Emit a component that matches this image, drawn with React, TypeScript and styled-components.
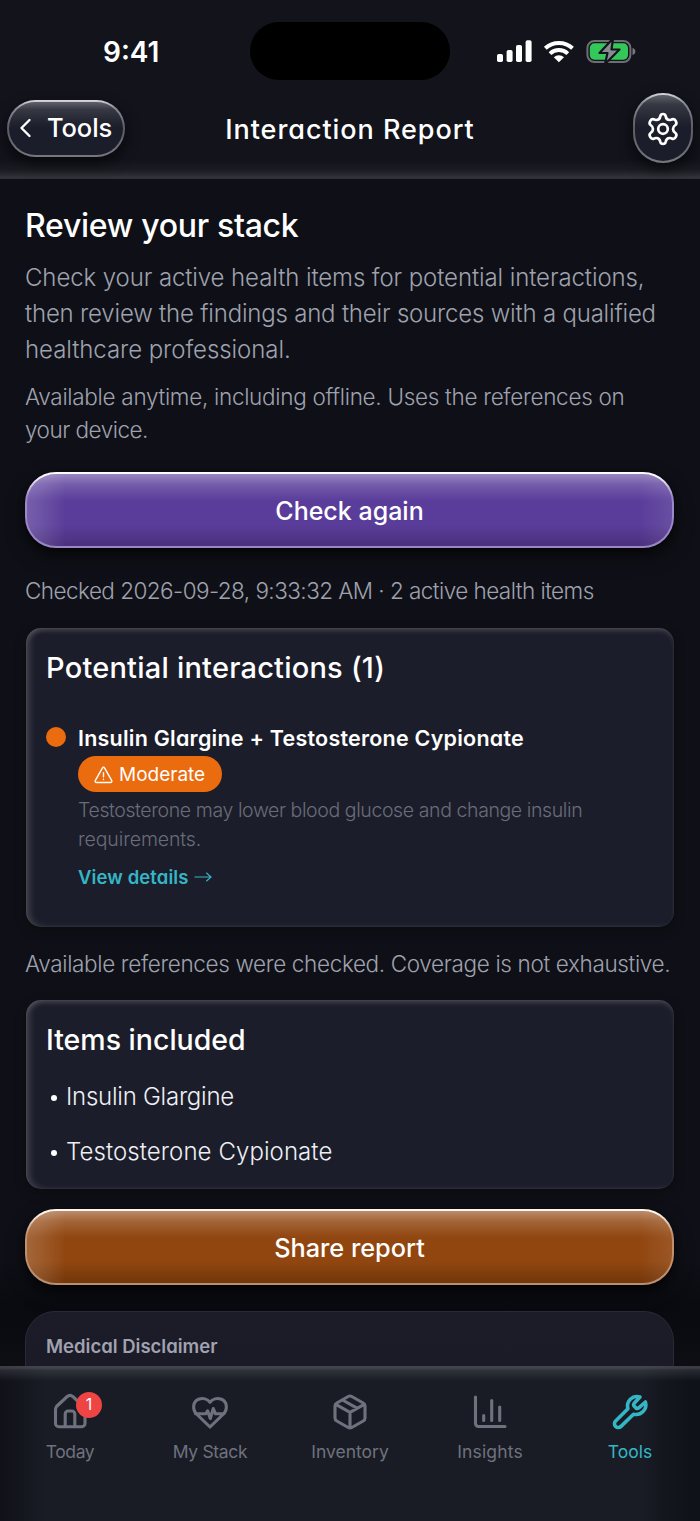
import React from "react";
import styled, { createGlobalStyle, css } from "styled-components";

const GlobalStyle = createGlobalStyle`
  *, *::before, *::after { box-sizing: border-box; }
  html, body { margin: 0; padding: 0; background: #0f1017; }
  body { font-family: Inter, "Liberation Sans", sans-serif; color: #fff; overflow: hidden; }
  h1, h2, p, ul { margin: 0; padding: 0; font-weight: inherit; }
  button { font: inherit; color: inherit; margin: 0; cursor: pointer; }
`;

type TextProps = {
  $size: number;
  $line: number;
  $weight?: number;
  $track?: number;
  $color?: string;
  $round?: boolean;
};

const typeStyle = css<TextProps>`
  font-size: ${(p) => p.$size}px;
  line-height: ${(p) => p.$line}px;
  font-weight: ${(p) => p.$weight ?? 300};
  letter-spacing: ${(p) => p.$track ?? 0}px;
  color: ${(p) => p.$color ?? "#fff"};
  white-space: nowrap;
  ${(p) => p.$round && 'font-feature-settings: "cv11";'}
`;

const Label = styled.span<TextProps>`
  ${typeStyle}
`;
const Title = styled.h1<TextProps>`
  ${typeStyle}
`;
const Heading = styled.h2<TextProps>`
  ${typeStyle}
`;
const Line = styled.span<{ $track: number }>`
  display: block;
  letter-spacing: ${(p) => p.$track}px;
`;
const Paragraph = styled.p<TextProps & { $top?: number }>`
  ${typeStyle}
  margin-top: ${(p) => p.$top ?? 0}px;
`;

const Screen = styled.div`
  width: 700px;
  height: 1521px;
  display: flex;
  flex-direction: column;
  background: #0f1017;
  overflow: hidden;
`;

const TopBar = styled.header`
  flex: none;
  height: 179px;
  background: linear-gradient(180deg, #12131b 0, #12131b 160px, #1b1c23 170px, #303137 177px, #38393e 178px, #25262c 179px);
`;

const StatusBar = styled.div`
  height: 92px;
  padding: 22px 64px 0 103px;
  display: grid;
  grid-template-columns: 147px 200px 1fr;
`;

const Clock = styled(Label)`
  align-self: start;
  margin-top: 9px;
`;

const Island = styled.div`
  height: 58px;
  border-radius: 29px;
  background: #000;
`;

const StatusIcons = styled.div`
  display: flex;
  justify-content: flex-end;
  align-items: flex-start;
  padding-top: 16px;
`;

const NavRow = styled.div`
  height: 72px;
  padding: 0 7px;
  display: grid;
  grid-template-columns: 118px 1fr 118px;
  align-items: start;
`;

const glass = css`
  border: 2px solid transparent;
  background:
    linear-gradient(180deg, rgba(255, 255, 255, 0.3) 0, rgba(255, 255, 255, 0.12) 14%, rgba(255, 255, 255, 0.03) 38%, rgba(255, 255, 255, 0) 50%) padding-box,
    linear-gradient(#1b1d2a, #1b1d2a) padding-box,
    linear-gradient(180deg, #d9dade 0, #8a8b92 14%, #5a5b63 50%, #77787f 100%) border-box;
  box-shadow: 0 6px 14px rgba(0, 0, 0, 0.6);
`;

const BackButton = styled.button`
  ${glass}
  width: 118px;
  height: 57px;
  margin-top: 8px;
  border-radius: 29px;
  padding: 0 0 1px 10px;
  display: flex;
  align-items: center;
  gap: 15px;
`;

const NavTitle = styled(Title)`
  text-align: center;
  padding-top: 20px;
`;

const SettingsButton = styled.button`
  ${glass}
  width: 60px;
  height: 70px;
  margin-top: 1px;
  border-radius: 30px;
  padding: 1px 0 0;
  justify-self: end;
  display: flex;
  align-items: center;
  justify-content: center;
`;

const Content = styled.main`
  flex: 1;
  min-height: 0;
  overflow: hidden;
  padding: 27px 26px 0 25px;
  display: flex;
  flex-direction: column;
  background: linear-gradient(180deg, #0f1017 0, #0f1017 1080px, #090a0f 1130px, #0d0e14 1180px);
`;

type Tone = "violet" | "amber";
const tones: Record<Tone, { base: string; low: string; edge: string; mid: string; bright: string }> = {
  violet: { base: "#5a3d9a", low: "#4c3180", edge: "#9a86c4", mid: "#9c88c8", bright: "#fbfaff" },
  amber: { base: "#914610", low: "#75380a", edge: "#b98f70", mid: "#c08f6c", bright: "#fff6ee" },
};

const ActionButton = styled.button<{ $tone: Tone; $top: number }>`
  flex: none;
  height: 76px;
  margin-top: ${(p) => p.$top}px;
  padding: 3px 0 0;
  border: 2px solid transparent;
  border-radius: 31px;
  background:
    linear-gradient(180deg, rgba(255, 255, 255, 0.38) 0, rgba(255, 255, 255, 0.17) 14%, rgba(255, 255, 255, 0.03) 32%, rgba(255, 255, 255, 0) 38%) padding-box,
    linear-gradient(90deg, rgba(255, 255, 255, 0.17) 0, rgba(255, 255, 255, 0.12) 2%, rgba(255, 255, 255, 0) 6%, rgba(255, 255, 255, 0) 95%, rgba(255, 255, 255, 0.09) 100%) padding-box,
    linear-gradient(180deg, ${(p) => tones[p.$tone].base} 70%, ${(p) => tones[p.$tone].low} 97%) padding-box,
    linear-gradient(180deg, ${(p) => tones[p.$tone].bright} 0, ${(p) => tones[p.$tone].bright} 5%, ${(p) => tones[p.$tone].mid} 32%, ${(p) => tones[p.$tone].mid} 70%, ${(p) => tones[p.$tone].edge} 100%) border-box;
  box-shadow: 0 8px 18px rgba(0, 0, 0, 0.55), 0 2px 6px rgba(0, 0, 0, 0.4);
`;

const Card = styled.section<{ $height: number; $top: number }>`
  flex: none;
  height: ${(p) => p.$height}px;
  margin-top: ${(p) => p.$top}px;
  margin-left: 1px;
  padding: 20px 20px 0 20px;
  border-radius: 15px;
  background: #1c1d2a;
  box-shadow:
    inset 0 0 0 1px rgba(255, 255, 255, 0.025),
    inset 5px 0 6px -1px rgba(255, 255, 255, 0.15),
    inset 0 4px 5px -1px rgba(255, 255, 255, 0.13),
    0 4px 12px rgba(0, 0, 0, 0.3);
`;

const Finding = styled.div`
  display: grid;
  grid-template-columns: 20px 1fr;
  column-gap: 12px;
  margin-top: 35px;
`;

const SeverityDot = styled.span`
  width: 20px;
  height: 20px;
  margin-top: 4px;
  border-radius: 50%;
  background: #ea6c0f;
`;

const FindingBody = styled.div`
  display: flex;
  flex-direction: column;
  align-items: flex-start;
`;

const Badge = styled.span`
  width: 144px;
  height: 36px;
  margin-top: 3px;
  padding: 2px 0 0 16px;
  border-radius: 18px;
  background: #ea6c0f;
  display: flex;
  align-items: center;
  gap: 6px;
`;

const DetailsLink = styled.span`
  display: flex;
  align-items: center;
  gap: 5px;
  margin-top: 9px;
`;

const ItemList = styled.ul`
  list-style: none;
  margin-top: 10px;
`;

const Item = styled.li`
  height: 55px;
  display: flex;
  align-items: center;
  gap: 9px;
  padding-left: 5px;
  &::before {
    content: "";
    width: 6px;
    height: 6px;
    margin-top: 2px;
    border-radius: 50%;
    background: #fff;
  }
`;

const Disclaimer = styled.section`
  flex: none;
  height: 90px;
  margin-top: 26px;
  padding: 21px 20px 0;
  border: 1px solid #292a36;
  border-radius: 30px 30px 0 0;
  background: linear-gradient(180deg, #1b1c28 0, #1a1b26 60%, #151620 75%);
`;

const TabBar = styled.nav`
  flex: none;
  height: 155px;
  padding-top: 26px;
  display: grid;
  grid-template-columns: repeat(5, 140px);
  background:
    linear-gradient(180deg, rgba(255, 255, 255, 0.18) 0, rgba(255, 255, 255, 0.18) 2px, rgba(255, 255, 255, 0.1) 4px, rgba(255, 255, 255, 0) 15px),
    linear-gradient(90deg, #10111a 0, #14161e 20px, #191c25 45px, #191c25 640px, #14161e 665px, #10121a 690px);
`;

const Tab = styled.div<{ $active?: boolean }>`
  display: flex;
  flex-direction: column;
  align-items: center;
  color: ${(p) => (p.$active ? "#34b6c5" : "#6f727e")};
`;

const IconSlot = styled.div`
  position: relative;
  width: 40px;
  height: 40px;
`;

const TabIcon = styled.svg`
  display: block;
  width: 40px;
  height: 40px;
  fill: none;
  stroke: currentColor;
  stroke-width: 3.1;
  stroke-linecap: round;
  stroke-linejoin: round;
`;

const Count = styled.span`
  position: absolute;
  left: 26px;
  top: 0;
  width: 26px;
  height: 26px;
  border-radius: 50%;
  background: #ef4444;
  color: #fff;
  font-size: 16px;
  line-height: 25px;
  text-align: center;
`;

const tabs = [
  {
    name: "Today",
    track: -0.4,
    count: 1,
    icon: <path d="M6.500 14.500 17.200 4.500q2.800-2.300 5.600 0L33.500 14.500Q35 16 35 18V31.500a3.200 3.200 0 0 1-3.200 3.200H8.700A3.200 3.200 0 0 1 5.500 31.500V18Q5.500 16 6.500 14.500ZM15.200 34.500V22a3 3 0 0 1 3-3h3.600a3 3 0 0 1 3 3v12.500" />,
  },
  {
    name: "My Stack",
    track: -0.35,
    icon: (
      <path d="M20 35 6.500 22C2 17 3 9.500 8.500 7.300 13 5.500 17.500 7 20 10.300 22.500 7 27 5.500 31.500 7.300 37 9.500 38 17 33.500 22ZM5.500 21.800H15.800L17.600 18.800 20.300 26.500 23.300 16.500 25.500 21.800H34" />
    ),
  },
  {
    name: "Inventory",
    track: 0,
    icon: (
      <path d="M18.200 4.500q1.800-1 3.600 0L33.200 11q1.800 1 1.800 3V26q0 2-1.800 3L21.800 35.500q-1.800 1-3.600 0L6.800 29Q5 28 5 26V14q0-2 1.800-3ZM5.800 12.300 20 20.300 34.200 12.300M20 20.300V36M12.500 8 27 16.200" />
    ),
  },
  {
    name: "Insights",
    track: 0.15,
    icon: <path d="M5.500 5V31.500a3 3 0 0 0 3 3H35M13.700 23.500v5M21.700 8.500v20M29.700 15v13.500" />,
  },
  {
    name: "Tools",
    track: 0,
    active: true,
    icon: (
      <path
        strokeWidth="3.600"
        d="M30 5 24.200 11.300q-1.200 1.600.1 3l1.500 1.500q1.500 1.300 3 .1L35.400 10C37.500 17.500 31 24 23.500 22.200L11 34.400a3.800 3.800 0 0 1-5.400-5.400L17.900 16.800C15.800 9.500 22.500 2.800 30 5Z"
      />
    ),
  },
];

const muted = "#9fa2ae";

export default function App() {
  return (
    <>
      <GlobalStyle />
      <Screen>
        <TopBar>
          <StatusBar>
            <Clock $size={28} $line={42} $weight={600} $track={0}>9:41</Clock>
            <Island />
            <StatusIcons>
              <svg width="140" height="26" viewBox="0 0 140 26" fill="none">
                <g fill="#fff">
                  <rect x="1" y="16" width="6" height="8" rx="1.800" />
                  <rect x="10.600" y="12" width="6" height="12" rx="1.800" />
                  <rect x="20" y="7" width="6" height="17" rx="1.800" />
                  <rect x="29.600" y="2.300" width="6" height="21.700" rx="1.800" />
                  <path d="M62.900 24.300 57.800 19.300a7.400 7.400 0 0 1 10.200 0Z" />
                </g>
                <g stroke="#fff" strokeWidth="4">
                  <path d="M49.300 10.300a19.800 19.800 0 0 1 27.200 0" />
                  <path d="M54 15.600a13 13 0 0 1 17.800 0" />
                </g>
                <rect x="91.400" y="3" width="43" height="21" rx="7" stroke="#6d6e73" strokeWidth="2" />
                <rect x="93.800" y="5.300" width="38.200" height="16.400" rx="4.600" fill="#34c759" />
                <path d="M136.500 10q2.800.7 2.800 3.500t-2.800 3.500Z" fill="#77787c" />
                <path d="M117 .5 103.500 15h8L109 26 123.500 11.500h-8Z" fill="#8a8b90" stroke="#12131b" strokeWidth="2.200" strokeLinejoin="round" />
              </svg>
            </StatusIcons>
          </StatusBar>
          <NavRow>
            <BackButton>
              <svg width="13" height="20" viewBox="0 0 13 20" fill="none" stroke="#fff" strokeWidth="2.400" strokeLinecap="round" strokeLinejoin="round">
                <path d="M10.500 2 2.500 10l8 8" />
              </svg>
              <Label $size={25.500} $line={32} $weight={500} $track={-0.1}>Tools</Label>
            </BackButton>
            <NavTitle $size={27} $line={36} $weight={500} $track={0.95} $round>Interaction Report</NavTitle>
            <SettingsButton>
              <svg width="34" height="34" viewBox="0 0 34 34" fill="none" stroke="#fff" strokeWidth="2.700" strokeLinejoin="round">
                <path d="M14.300 4.200q.5-2.200 2.700-2.200t2.700 2.200q.7 4 4.300 3.800 1-.1 2-.6 2.300-.8 3.700 1.500 1.600 2.700-.3 4.100Q27 14.600 27 17t2.400 4q1.900 1.400.3 4.100-1.400 2.300-3.700 1.500-1-.5-2-.6-3.600-.2-4.300 3.800-.5 2.200-2.700 2.200t-2.700-2.200Q13.600 25.800 10 26q-1 .1-2 .6-2.300.8-3.700-1.500-1.600-2.700.3-4.100Q7 19.400 7 17t-2.400-4Q2.700 11.600 4.300 8.900 5.700 6.600 8 7.400q1 .5 2 .6 3.600.2 4.300-3.800Z" />
                <circle cx="17" cy="17" r="4.800" />
              </svg>
            </SettingsButton>
          </NavRow>
        </TopBar>

        <Content>
          <Title $size={32} $line={40} $weight={500} $track={-0.3}>Review your stack</Title>
          <Paragraph $size={24} $line={35.8} $top={14} $color={muted}>
            <Line $track={-0.1}>Check your active health items for potential interactions,</Line>
            <Line $track={-0.2}>then review the findings and their sources with a qualified</Line>
            <Line $track={-0.07}>healthcare professional.</Line>
          </Paragraph>
          <Paragraph $size={22.5} $line={33.5} $top={12.500} $color={muted}>
            <Line $track={-0.3}>Available anytime, including offline. Uses the references on</Line>
            <Line $track={-0.5}>your device.</Line>
          </Paragraph>
          <ActionButton $tone="violet" $top={25}>
            <Label $size={25} $line={32} $weight={500}>Check again</Label>
          </ActionButton>
          <Paragraph $size={22.5} $line={34} $top={26.500} $track={-0.55} $color={muted}>
            Checked 2026-09-28, 9:33:32 AM · 2 active health items
          </Paragraph>
          <Card $height={299} $top={19.500}>
            <Heading $size={29} $line={40} $weight={500} $track={0.22}>Potential interactions (1)</Heading>
            <Finding>
              <SeverityDot />
              <FindingBody>
                <Label $size={21.500} $line={30} $weight={600} $track={0.23} $round>Insulin Glargine + Testosterone Cypionate</Label>
                <Badge>
                  <svg width="19" height="18" viewBox="0 0 19 18" fill="none" stroke="#fff" strokeWidth="1.400" strokeLinecap="round" strokeLinejoin="round">
                    <path d="M8.200 2.300q1.300-2.200 2.600 0l6.800 12q1 2-1.400 2.200H2.800Q.4 16.300 1.400 14.300ZM9.500 6.800v4M9.500 13.300v.3" />
                  </svg>
                  <Label $size={19} $line={28} $weight={400}>Moderate</Label>
                </Badge>
                <Paragraph $size={19.500} $line={28.700} $top={4} $color="#696c79">
                  <Line $track={-0.4}>Testosterone may lower blood glucose and change insulin</Line>
                  <Line $track={-0.12}>requirements.</Line>
                </Paragraph>
                <DetailsLink>
                  <Label $size={18.500} $line={30} $weight={600} $track={0.1} $color="#34b6c5" $round>View details</Label>
                  <svg width="18" height="12" viewBox="0 0 18 12" fill="none" stroke="#34b6c5" strokeWidth="1.200">
                    <path d="M.5 6h16.500M12.300 1.800 17 6l-4.700 4.200" />
                  </svg>
                </DetailsLink>
              </FindingBody>
            </Finding>
          </Card>
          <Paragraph $size={22.5} $line={34} $top={20} $track={-0.35} $color={muted}>
            Available references were checked. Coverage is not exhaustive.
          </Paragraph>
          <Card $height={189} $top={19}>
            <Heading $size={28.500} $line={40} $weight={500}>Items included</Heading>
            <ItemList>
              <Item><Label $size={24} $line={34} $track={-0.25} $color="#eef0f5">Insulin Glargine</Label></Item>
              <Item><Label $size={24} $line={34} $track={0.08} $color="#eef0f5">Testosterone Cypionate</Label></Item>
            </ItemList>
          </Card>
          <ActionButton $tone="amber" $top={20}>
            <Label $size={25.300} $line={32} $weight={500}>Share report</Label>
          </ActionButton>
          <Disclaimer>
            <Label $size={18.500} $line={26} $weight={600} $color="#a0a2b1" $round>Medical Disclaimer</Label>
          </Disclaimer>
        </Content>

        <TabBar>
          {tabs.map((t) => (
            <Tab key={t.name} $active={t.active}>
              <IconSlot>
                <TabIcon viewBox="0 0 40 40">{t.icon}</TabIcon>
                {t.count && <Count>{t.count}</Count>}
              </IconSlot>
              <Label $size={17.500} $line={40} $weight={400} $track={t.track} $color="currentColor">{t.name}</Label>
            </Tab>
          ))}
        </TabBar>
      </Screen>
    </>
  );
}
